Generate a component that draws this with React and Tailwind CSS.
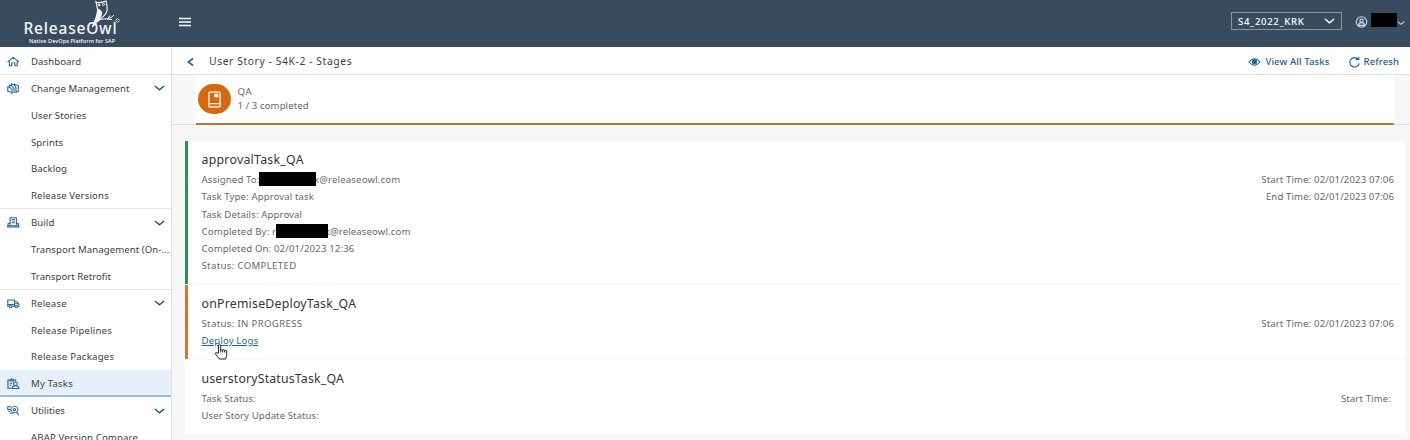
import React from "react";

const IconSvg = ({ children }) => (
  <svg viewBox="0 0 16 16" preserveAspectRatio="none" fill="none" stroke="currentColor" strokeWidth="1.400" className="h-[11px] w-[12.500px] shrink-0 text-[#2566a0]">
    {children}
  </svg>
);

const HomeIcon = () => (
  <IconSvg>
    <path d="M.8 8.500 8 2l7.200 6.500M3 7.500v6.800h3V10h4v4.300h3V7.500" />
  </IconSvg>
);
const ChangeIcon = () => (
  <IconSvg>
    <path d="M1 5.500q3 0 5.500 4v5.500Q4 12 1 12ZM3 5V3q4 1 6 5v6.500M5.500 3.500V1.200q5 1.500 6 6V14M9 1.500l5.500 2.500v8L11 14.500" />
  </IconSvg>
);
const BuildIcon = () => (
  <IconSvg>
    <path d="M4 11.500V1h8v10.500M6 3.500h4M6 6h4M6 8.500h4M3.500 9.500H1.500l-.7 5.200h14.400l-.7-5.200h-2M1 12.200h14M1 14.300h14" />
  </IconSvg>
);
const TruckIcon = () => (
  <IconSvg>
    <path d="M3 12H1V3h8.500v9H6M9.500 5.500h3.200L15.200 8.500V12h-1.500M10.500 12h-1M10 8.500h5M1 9.500h8" />
    <circle cx="4.500" cy="12.500" r="1.700" />
    <circle cx="12" cy="12.500" r="1.700" />
  </IconSvg>
);
const TasksIcon = () => (
  <IconSvg>
    <path d="M5.500 14.800H1.200V3h2.500M8.500 3h2.500v2M3.700 4.500V2.500H5L6 1l1 1.500h1.500v2ZM3.500 7.500h3M3.500 10.500h2M6.500 15.200c0-2.500 2-4 4.200-4s4.500 1.500 4.500 4Z" />
    <circle cx="10.700" cy="8.300" r="2.500" />
  </IconSvg>
);
const UtilIcon = () => (
  <IconSvg>
    <circle cx="9.500" cy="6.500" r="4.500" />
    <circle cx="9.500" cy="6.500" r="1.500" />
    <path d="m12 10 3.200 5M5 2.500H1v4h3.500M1.500 9h3M4 12h4" />
  </IconSvg>
);

const Chevron = ({ className }) => (
  <svg viewBox="0 0 12 6" fill="none" stroke="currentColor" className={className}>
    <path d="M1 .8 6 5l5-4.200" strokeWidth="1.700" />
  </svg>
);

const NAV = [
  { t: "Dashboard", s: "tracking-[0.07px]", icon: <HomeIcon />, end: true },
  { t: "Change Management", s: "tracking-[0.05px]", icon: <ChangeIcon />, open: true },
  { t: "User Stories", s: "tracking-[0.07px]" },
  { t: "Sprints", s: "tracking-[0.07px]" },
  { t: "Backlog", s: "tracking-[0.07px]" },
  { t: "Release Versions", s: "tracking-[0.15px]", end: true },
  { t: "Build", s: "tracking-[0.07px]", icon: <BuildIcon />, open: true },
  { t: "Transport Management (On-...", s: "tracking-[0.08px]" },
  { t: "Transport Retrofit", s: "tracking-[0.01px]", end: true },
  { t: "Release", s: "tracking-[0.15px]", icon: <TruckIcon />, open: true },
  { t: "Release Pipelines", s: "tracking-[0.2px]" },
  { t: "Release Packages", s: "tracking-[0.25px]" },
  { t: "My Tasks", s: "tracking-[0.2px]", icon: <TasksIcon />, active: true },
  { t: "Utilities", s: "tracking-[0.01px]", icon: <UtilIcon />, open: true },
  { t: "ABAP Version Compare", s: "tracking-[0.13px]" },
];

const NavRow = ({ item }) => (
  <div
    className={
      "flex h-[26.870px] shrink-0 items-center border-b pt-[1px] pl-[7px] " +
      (item.active ? "border-b-2 border-[#9dbdd6] bg-[#e5f0fa]" : item.end ? "border-[#e4e4e4]" : "border-transparent")
    }
  >
    <span className="flex w-6 shrink-0">{item.icon}</span>
    <span className={"pt-[1.500px] whitespace-nowrap " + item.s}>{item.t}</span>
    {item.open && <Chevron className="mr-[6px] ml-auto h-[6px] w-[11px] text-[#1b5a8f]" />}
  </div>
);

const Redacted = ({ className }) => <span className={"z-10 inline-block h-[14px] bg-black " + className} />;

const Line = ({ children }) => <div className="flex h-[17.100px] items-center whitespace-pre">{children}</div>;

const Task = ({ title, className, times, titleClass = "tracking-[0.27px]", timesClass = "", children }) => (
  <section className={"flex justify-between border-l-[3px] bg-white pt-[9px] pl-[13.500px] pr-[11px] " + className}>
    <div>
      <h2 className={"mb-[2px] flex h-5 items-center text-[12.300px] text-[#32363a] " + titleClass}>{title}</h2>
      {children}
    </div>
    <div className={"flex flex-col items-end pt-[21.500px] " + timesClass}>{times}</div>
  </section>
);

export default function App() {
  return (
    <div className="flex h-[440px] w-[1410px] flex-col overflow-hidden bg-white font-['Noto_Sans','Liberation_Sans',sans-serif] text-[9.600px] text-[#3b3f43]">
      <header className="flex h-[47px] shrink-0 items-center bg-[#394c5f] pr-[5px] text-white">
        <div className="relative h-full w-[178px]">
          <div className="flex h-full flex-col pt-[19px] pl-[23.500px]">
            <div className="text-[15.500px] leading-[18px] font-medium tracking-[0.800px] text-[#f4f7f9]">ReleaseOwl</div>
            <div className="pl-[5.500px] text-[5.500px] leading-[8px] font-medium tracking-[0.080px] whitespace-nowrap">Native DevOps Platform for SAP</div>
          </div>
          <svg viewBox="0 0 32 28" className="absolute top-0 left-[89px] h-[28px] w-[32px]" fill="none" stroke="#fff">
            <path d="M7 1.800q1 1 3 .8 4 0 7-1.500l1 5c1 5-1 9-6 12l-8 8c1-4 2-5 3-8 1-5 3-7 1-11Z" strokeWidth="1.100" />
            <path d="M9 9c0 5-2 6-4 14 6-3 8-7 8-10 0-2-2-4-4-4Z" fill="#fff" stroke="none" />
            <circle cx="10" cy="5" r="1" />
            <circle cx="14.500" cy="4.500" r="1" />
            <path d="M3 26c5-6 8-7 13-7 4 0 6-1 9-4M18 19l5 .5M19 18.500l2-3" />
            <circle cx="28.500" cy="20.500" r="1.600" strokeWidth=".7" />
          </svg>
        </div>
        <svg viewBox="0 0 12 10" className="mt-[-4px] ml-[1px] h-[10px] w-[12px]" stroke="#fff" strokeWidth="1.300">
          <path d="M0 1.500h12M0 5h12M0 8.500h12" />
        </svg>
        <div className="mt-[-5px] ml-auto flex h-[18px] w-[111px] items-center justify-between border border-[#8796a4] pr-[6px] pl-[6px]">
          <span className="pt-[2px] font-medium tracking-[0.650px]">S4_2022_KRK</span>
          <Chevron className="h-[6px] w-[11px]" />
        </div>
        <svg viewBox="0 0 16 16" fill="none" stroke="#c6d8e8" strokeWidth="1.500" className="mt-[-4px] ml-[13px] h-[12px] w-[13px]">
          <circle cx="8" cy="8" r="7" />
          <circle cx="8" cy="6.300" r="2.200" />
          <path d="M4 12.500c.5-5 7.500-5 8 0Z" />
        </svg>
        <Redacted className="mt-[-7px] ml-[3px] w-[26px]" />
        <Chevron className="mt-[-2px] h-[4px] w-[8px] text-[#b8c6d2]" />
      </header>
      <div className="flex min-h-0 flex-1">
        <nav className="flex w-[172px] shrink-0 flex-col overflow-hidden border-r border-[#e2e2e2] pt-[1px]">
          {NAV.map((n) => (
            <NavRow key={n.t} item={n} />
          ))}
        </nav>
        <main className="flex min-w-0 flex-1 flex-col bg-[#f7f7f7]">
          <div className="flex h-[28px] shrink-0 items-center border-b border-[#e2e2e2] bg-white pt-[3px] pr-[11px] pl-[15px]">
            <svg viewBox="0 0 8 10" className="h-[10px] w-[7px]" fill="none" stroke="#1b5a8f" strokeWidth="1.800">
              <path d="M7 .8 1.500 5 7 9.200" />
            </svg>
            <h1 className="ml-[15px] text-[10.300px] tracking-[0.600px]">User Story - S4K-2 - Stages</h1>
            <div className="ml-auto flex items-center text-[#1b5f9e]">
              <svg viewBox="0 0 16 10" className="mr-1 h-[8px] w-[13px]" fill="none" stroke="currentColor" strokeWidth="1.300">
                <path d="M1 5q7-8 14 0-7 8-14 0Z" />
                <circle cx="8" cy="4.700" r="2.600" fill="currentColor" />
              </svg>
              <span className="font-medium tracking-[0.100px]">View All Tasks</span>
              <svg viewBox="0 0 14 14" className="mr-[3px] ml-[18px] h-[12px] w-[13px]" fill="none" stroke="currentColor" strokeWidth="1.300">
                <path d="M11.500 4A5.500 5.500 0 1 0 12.500 8.500M8.500 4h3.500V.8" />
              </svg>
              <span className="font-medium tracking-[0.050px]">Refresh</span>
            </div>
          </div>
          <div className="flex h-[50px] shrink-0 flex-col border-b border-[#dadada] pr-[16px] pl-[24px]">
            <div className="flex h-[50px] shrink-0 items-center border-b-2 border-[#b97631] bg-white pl-[2px]">
              <div className="flex h-[30px] w-[33px] items-center justify-center rounded-full bg-[#d5690f]">
                <svg viewBox="0 0 14 18" className="h-[17px] w-[13px]" fill="none" stroke="#fff" strokeWidth="1.300">
                  <rect x="1" y="1" width="12" height="16" rx="1" />
                  <path d="M1 13.500h12" />
                  <rect x="7.500" y="3.500" width="3" height="2.500" fill="#fff" />
                </svg>
              </div>
              <div className="ml-[6.500px] leading-[14.500px] text-[#66696c]">
                <div className="tracking-[0.7px]">QA</div>
                <div className="tracking-[0.080px]">1 / 3 completed</div>
              </div>
            </div>
          </div>
          <div className="flex flex-col pt-[16px] pr-[5px] pl-[13px] tracking-[0.120px] text-[#66696c]">
            <Task
              title="approvalTask_QA"
              className="h-[143px] border-[#2b9454]"
              times={
                <>
                  <Line>Start Time: 02/01/2023 07:06</Line>
                  <Line>End Time: 02/01/2023 07:06</Line>
                </>
              }
            >
              <Line>
                Assigned To:<Redacted className="mt-[-4px] w-[57px]" />
                <span className="ml-[-2.500px] tracking-[0.170px]">k@releaseowl.com</span>
              </Line>
              <Line>Task Type: Approval task</Line>
              <Line>Task Details: Approval</Line>
              <Line>
                <span className="tracking-[0.180px]">Completed By: r</span>
                <Redacted className="mt-[-2px] w-[52px]" />
                <span className="ml-[-3.500px] tracking-[0.130px]">k@releaseowl.com</span>
              </Line>
              <Line>
                <span className="tracking-[0.150px]">Completed On: 02/01/2023 12:36</span>
              </Line>
              <Line>
                <span className="tracking-[0.350px]">Status: COMPLETED</span>
              </Line>
            </Task>
            <Task
              title="onPremiseDeployTask_QA"
              titleClass="tracking-[0.230px]"
              className="mt-px h-[74px] border-[#d07a28]"
              times={<Line>Start Time: 02/01/2023 07:06</Line>}
            >
              <Line>
                <span className="tracking-[0.350px]">Status: IN PROGRESS</span>
              </Line>
              <Line>
                <a className="tracking-[0.150px] text-[#2566a0] underline">Deploy Logs</a>
              </Line>
            </Task>
            <Task
              title="userstoryStatusTask_QA"
              titleClass="tracking-[0.180px]"
              className="mt-px h-[74px] border-white"
              times={<Line>Start Time:</Line>}
              timesClass="pr-[3px]"
            >
              <Line>Task Status:</Line>
              <Line>
                <span className="tracking-[0.070px]">User Story Update Status:</span>
              </Line>
            </Task>
          </div>
        </main>
      </div>
      <svg viewBox="0 0 14 17" className="absolute top-[343px] left-[214px] h-[17px] w-[14px]" fill="#fff" stroke="#222" strokeWidth="1">
        <path d="M4.500 10V2q1.200-1.600 2.200 0v5q1-1 2 0 1-.8 2 .3 1.400-.6 2 .7v4.500L11.500 16H5.500L1 10.500q.8-1.500 2.200-.5Z" />
        <path d="M6.700 7v2.500M8.700 7v2.500M10.700 7.500v2" />
      </svg>
    </div>
  );
}
